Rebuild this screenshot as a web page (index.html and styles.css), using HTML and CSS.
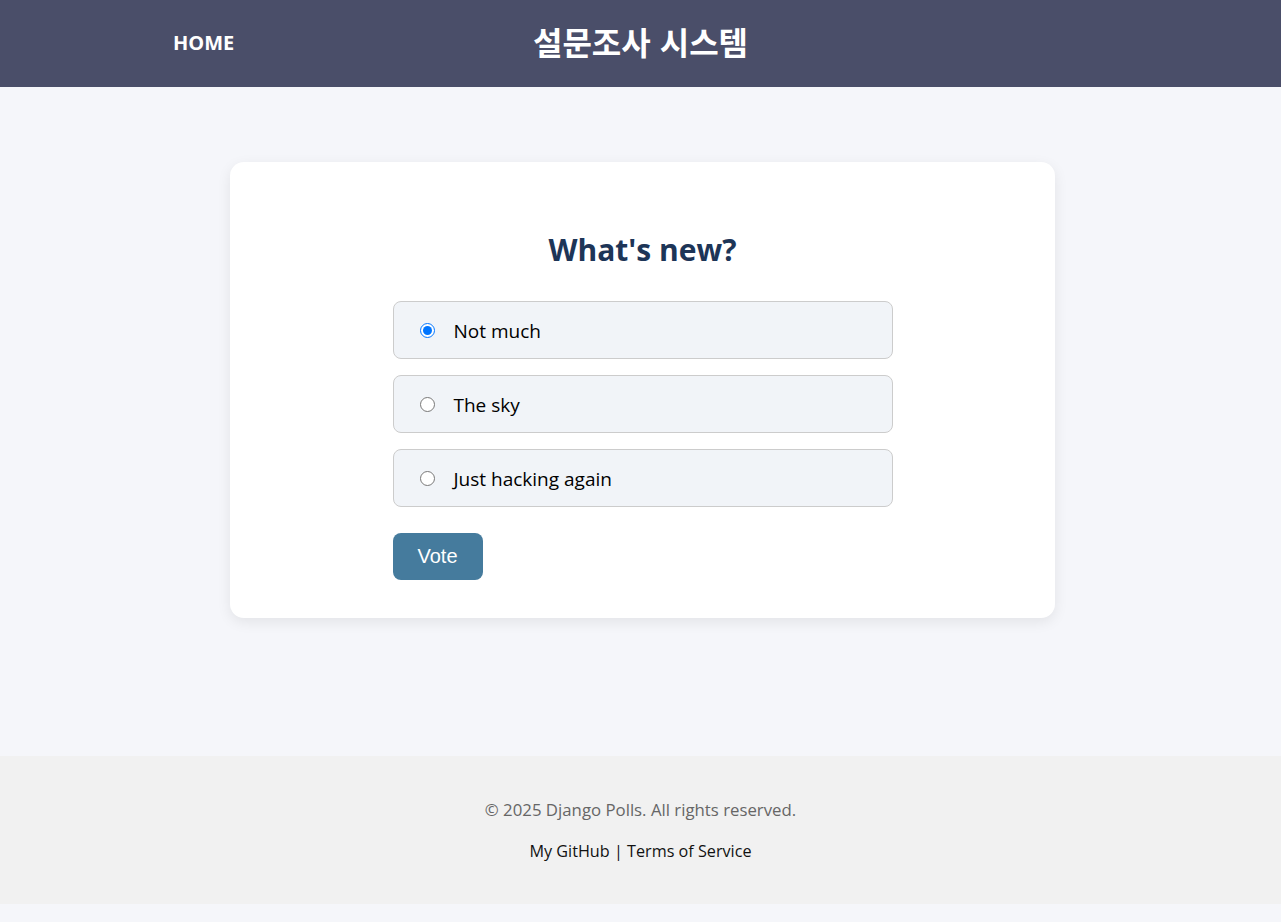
FILE: index.html
```html
<!DOCTYPE html>
<html lang="ko">
<head>
<meta charset="utf-8">
<title>설문조사 시스템</title>
<link rel="stylesheet" href="styles.css">
</head>
<body>
<header class="topbar">
  <div class="topbar-inner">
    <a class="home" href="#">HOME</a>
    <h1 class="site-title">설문조사 시스템</h1>
    <span class="spacer"></span>
  </div>
</header>
<main class="main">
  <section class="card">
    <h2 class="question">What's new?</h2>
    <form class="poll">
      <label class="choice"><input type="radio" name="c" checked><span>Not much</span></label>
      <label class="choice"><input type="radio" name="c"><span>The sky</span></label>
      <label class="choice"><input type="radio" name="c"><span>Just hacking again</span></label>
      <button type="button" class="vote">Vote</button>
    </form>
  </section>
</main>
<footer class="footer">
  <p class="copy">© 2025 Django Polls. All rights reserved.</p>
  <p class="links"><a href="#">My GitHub</a> | <a href="#">Terms of Service</a></p>
</footer>
</body>
</html>
```
FILE: styles.css
```css
* { box-sizing: border-box; }
html, body { margin: 0; padding: 0; }
body {
  background: #f5f6fa;
  font-family: "Open Sans", "Noto Sans CJK KR", sans-serif;
  color: #000;
  padding-bottom: 18px;
}
.topbar {
  background: #4a4e69;
  height: 87px;
  display: flex;
  align-items: center;
}
.topbar-inner {
  width: 100%;
  padding: 0 173px 2px;
  display: flex;
  align-items: center;
  justify-content: space-between;
}
.home {
  color: #fff;
  text-decoration: none;
  font-weight: 700;
  font-size: 20px;
  width: 200px;
}
.spacer { width: 200px; }
.site-title {
  margin: 0 0 4px;
  color: #fff;
  font-family: "Noto Sans CJK KR", sans-serif;
  font-weight: 700;
  font-size: 32px;
}
.main {
  padding: 75px 0 138px 4px;
  display: flex;
  justify-content: center;
}
.card {
  width: 825px;
  background: #fff;
  border-radius: 14px;
  box-shadow: 0 4px 14px rgba(0,0,0,0.08);
  padding: 40px 0 38px;
  display: flex;
  flex-direction: column;
  align-items: center;
}
.question {
  margin: 27px 0 30px;
  color: #1d3557;
  font-size: 30px;
  font-weight: 700;
  line-height: 42px;
}
.poll {
  width: 500px;
  display: flex;
  flex-direction: column;
  gap: 16px;
}
.choice {
  display: flex;
  align-items: center;
  height: 58px;
  padding: 0 20px;
  background: #f1f4f8;
  border: 1px solid #ccc;
  border-radius: 8px;
  font-size: 19px;
  cursor: pointer;
}
.choice span { margin-top: 2px; }
.choice input {
  margin: 0 19px 0 6px;
  width: 15px;
  height: 15px;
  accent-color: #0075ff;
}
.vote {
  align-self: flex-start;
  margin-top: 10px;
  width: 90px;
  height: 47px;
  background: #457b9d;
  color: #fff;
  border: none;
  border-radius: 8px;
  font-family: "Liberation Sans", Arial, sans-serif;
  font-size: 20px;
  cursor: pointer;
}
.footer {
  background: #f1f1f1;
  height: 148px;
  padding-top: 40px;
  text-align: center;
}
.copy {
  margin: 0;
  color: #666;
  font-size: 16.8px;
  line-height: 28px;
}
.links {
  margin: 13px 0 0;
  color: #111;
  font-size: 16.2px;
  line-height: 28px;
}
.links a { color: #111; text-decoration: none; }
```
